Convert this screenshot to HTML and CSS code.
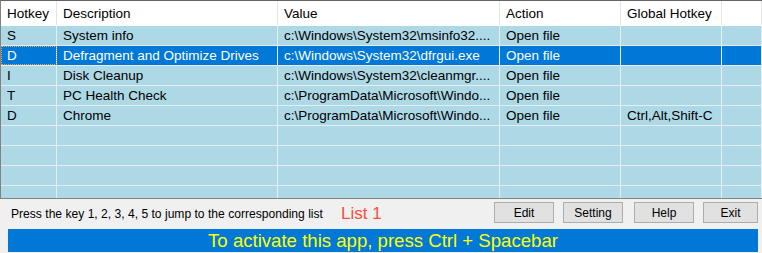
FILE: index.html
```html
<!DOCTYPE html>
<html lang="en">
<head>
    <meta charset="UTF-8">
    <title>Hotkey Launcher</title>
    <link rel="stylesheet" href="styles.css">
</head>
<body>
    <!-- Hotkey list -->
    <div class="list">
        <div class="row head">
            <span>Hotkey</span><span>Description</span><span>Value</span><span>Action</span><span>Global Hotkey</span><span></span>
        </div>
        <div class="row">
            <span>S</span><span>System info</span><span>c:\Windows\System32\msinfo32....</span><span>Open file</span><span></span><span></span>
        </div>
        <div class="row selected">
            <span>D</span><span>Defragment and Optimize Drives</span><span>c:\Windows\System32\dfrgui.exe</span><span>Open file</span><span></span><span></span>
        </div>
        <div class="row">
            <span>I</span><span>Disk Cleanup</span><span>c:\Windows\System32\cleanmgr....</span><span>Open file</span><span></span><span></span>
        </div>
        <div class="row">
            <span>T</span><span>PC Health Check</span><span>c:\ProgramData\Microsoft\Windo...</span><span>Open file</span><span></span><span></span>
        </div>
        <div class="row">
            <span>D</span><span>Chrome</span><span>c:\ProgramData\Microsoft\Windo...</span><span>Open file</span><span>Ctrl,Alt,Shift-C</span><span></span>
        </div>
        <div class="row"><span></span><span></span><span></span><span></span><span></span><span></span></div>
        <div class="row"><span></span><span></span><span></span><span></span><span></span><span></span></div>
        <div class="row"><span></span><span></span><span></span><span></span><span></span><span></span></div>
        <div class="row"><span></span><span></span><span></span><span></span><span></span><span></span></div>
    </div>

    <!-- Bottom bar -->
    <div class="toolbar">
        <span class="hint">Press the key 1, 2, 3, 4, 5 to jump to the corresponding list</span>
        <span class="list-name">List 1</span>
        <div class="buttons">
            <button class="edit">Edit</button>
            <button class="setting">Setting</button>
            <button class="help">Help</button>
            <button class="exit">Exit</button>
        </div>
    </div>

    <div class="banner">To activate this app, press Ctrl + Spacebar</div>
</body>
</html>
```

FILE: styles.css
```css
/* General */
body {
    margin: 0;
    width: 762px;
    height: 253px;
    overflow: hidden;
    background-color: #f0f0f0;
    font-family: 'Liberation Sans', Arial, sans-serif;
    color: #000;
}

/* List */
.list {
    border-top: 1px solid #646464;
    border-left: 1px solid #828282;
    border-bottom: 1px solid #828282;
    background-color: #add8e6;
    height: 197px;
    overflow: hidden;
}
.row {
    display: grid;
    grid-template-columns: 56px 221px 222px 121px 101px 1fr;
    height: 19px;
    border-top: 1px solid #e6eef0;
    font-size: 13.5px;
    line-height: 19px;
}
.row span {
    border-right: 1px solid #e6eef0;
    padding-left: 6px;
    white-space: nowrap;
    overflow: hidden;
}
.row.head {
    height: 24px;
    border-top: none;
    background-color: #fff;
    line-height: 25px;
}
.row.head span {
    border-right-color: #e5e5e5;
}
.row.head + .row {
    border-top: 1px solid #fff;
}
.row.selected {
    background-color: #0078d7;
    color: #fff;
}
.row.selected span:first-child {
    outline: 1px dotted #f0a050;
    outline-offset: -1px;
}

/* Bottom toolbar */
.toolbar {
    display: flex;
    align-items: center;
    height: 29px;
    padding-left: 11px;
}
.hint {
    font-size: 12.1px;
    width: 330px;
}
.list-name {
    color: #ff4b3a;
    font-size: 17px;
}
.buttons {
    display: flex;
    margin-left: auto;
    gap: 9px;
    margin-top: -2px;
}
.buttons button {
    height: 21px;
    width: 60px;
    padding: 0;
    background-color: #e1e1e1;
    border: 1px solid #adadad;
    font-family: 'Liberation Sans', Arial, sans-serif;
    font-size: 12px;
    color: #000;
}
.buttons .help {
    margin-left: 2px;
}
.buttons .exit {
    width: 55px;
    margin-right: 4px;
}

/* Banner */
.banner {
    margin: 1px 4px 0 8px;
    height: 23px;
    background-color: #0078d7;
    color: #ffff00;
    font-size: 18.6px;
    line-height: 24px;
    text-align: center;
}
```
